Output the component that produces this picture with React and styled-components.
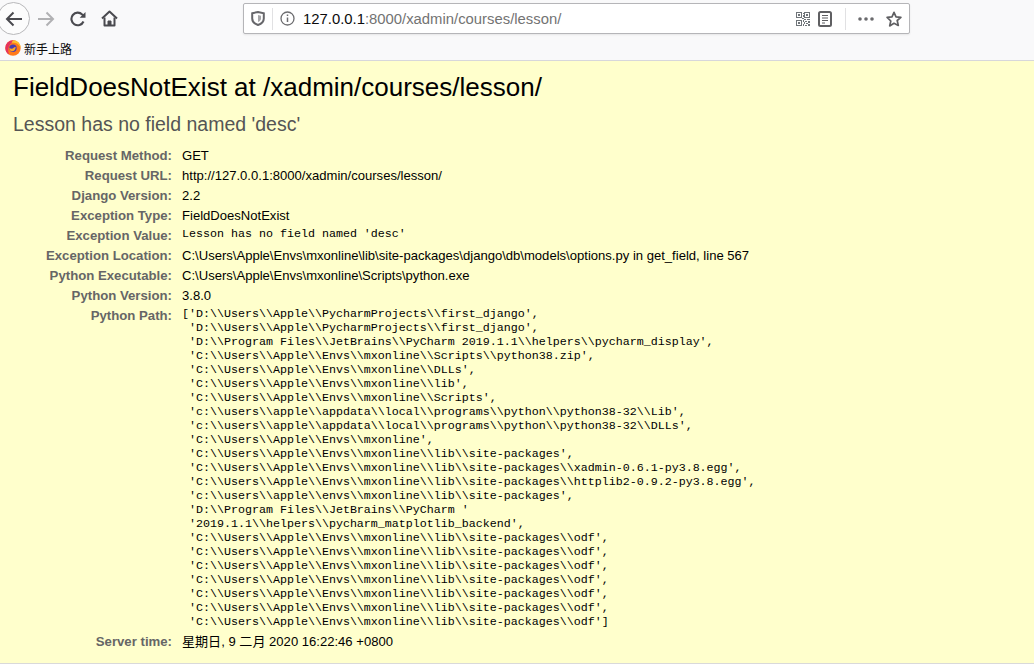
import React from "react";
import styled, { createGlobalStyle } from "styled-components";

const Global = createGlobalStyle`
  html, body { margin: 0; padding: 0; background: #ffc; }
  body { width: 1034px; height: 664px; overflow: hidden; font-family: "Liberation Sans", Arial, sans-serif; }
`;
const Page = styled.div`display: flex; flex-direction: column; height: 664px; overflow: hidden;`;
const Chrome = styled.header`
  background: #f9f9fa; height: 60px; border-bottom: 1px solid #d7d7db; flex: none;
  display: flex; flex-direction: column;
`;
const NavBar = styled.div`display: flex; align-items: center; height: 36px; padding-top: 1px;`;
const NavButtons = styled.div`display: flex; align-items: center; width: 243px; flex: none;`;
const BackButton = styled.div`
  margin-left: -3px; border: 1px solid #b8b8ba; border-radius: 50%;
  width: 31px; height: 31px; background: #fcfcfc; display: flex; align-items: center; justify-content: center; flex: none;
`;
const IconSlot = styled.div`
  display: flex; align-items: center; justify-content: center; flex: none;
  width: ${p => p.$w || 16}px; margin-left: ${p => p.$ml || 0}px;
`;
const UrlBar = styled.div`
  width: 665px; height: 29px; background: #fff; border: 1px solid #b5b5b8; border-radius: 2px;
  display: flex; align-items: center; box-shadow: 0 1px 2px rgba(0,0,0,.08); flex: none;
`;
const Divider = styled.span`width: 1px; height: 22px; background: #e1e1e3; flex: none;`;
const UrlText = styled.div`
  font-size: 14.85px; color: #737373; flex: 1; margin-left: 8px; white-space: nowrap;
  b { font-weight: normal; color: #0c0c0d; }
`;
const Bookmarks = styled.div`
  display: flex; align-items: center; height: 24px; padding-left: 5px; gap: 3px;
  font-size: 12px; color: #0c0c0d; font-family: "Noto Sans CJK SC", sans-serif;
`;
const Content = styled.main`flex: 1; background: #ffc; padding: 10px 13px 0; color: #000; border-bottom: 1px solid #d9d9d9;`;
const Title = styled.h1`margin: 0; font-weight: normal; font-size: 26px; line-height: 32px;`;
const Subtitle = styled.h2`margin: 9px 0 0; font-weight: normal; font-size: 19.5px; line-height: 24px; color: #555;`;
const Meta = styled.div`margin-top: 10px; display: grid; grid-template-columns: 159px 1fr; column-gap: 10px; font-size: 13.07px;`;
const Label = styled.div`
  text-align: right; font-weight: bold; color: #666; line-height: 14px; padding: 3px 0; font-size: 13.2px;
`;
const Value = styled.div`line-height: 14px; padding: 3px 0; white-space: nowrap;
  font-family: ${p => p.$cjk ? '"Liberation Sans", "Noto Sans CJK SC", sans-serif' : 'inherit'};
`;
const Mono = styled.pre`
  margin: 0; padding: 1px 0 3px; font-family: "Liberation Mono", "Courier New", monospace;
  font-size: 11.67px; line-height: 14px; white-space: pre;
`;

const rows = [
  ["Request Method:", "GET"],
  ["Request URL:", "http://127.0.0.1:8000/xadmin/courses/lesson/"],
  ["Django Version:", "2.2"],
  ["Exception Type:", "FieldDoesNotExist"],
  ["Exception Value:", "Lesson has no field named 'desc'", true],
  ["Exception Location:", "C:\\Users\\Apple\\Envs\\mxonline\\lib\\site-packages\\django\\db\\models\\options.py in get_field, line 567"],
  ["Python Executable:", "C:\\Users\\Apple\\Envs\\mxonline\\Scripts\\python.exe"],
  ["Python Version:", "3.8.0"],
];
const sp = "'C:\\\\Users\\\\Apple\\\\Envs\\\\mxonline\\\\lib\\\\site-packages\\\\odf'";
const path = `['D:\\\\Users\\\\Apple\\\\PycharmProjects\\\\first_django',
 'D:\\\\Users\\\\Apple\\\\PycharmProjects\\\\first_django',
 'D:\\\\Program Files\\\\JetBrains\\\\PyCharm 2019.1.1\\\\helpers\\\\pycharm_display',
 'C:\\\\Users\\\\Apple\\\\Envs\\\\mxonline\\\\Scripts\\\\python38.zip',
 'C:\\\\Users\\\\Apple\\\\Envs\\\\mxonline\\\\DLLs',
 'C:\\\\Users\\\\Apple\\\\Envs\\\\mxonline\\\\lib',
 'C:\\\\Users\\\\Apple\\\\Envs\\\\mxonline\\\\Scripts',
 'c:\\\\users\\\\apple\\\\appdata\\\\local\\\\programs\\\\python\\\\python38-32\\\\Lib',
 'c:\\\\users\\\\apple\\\\appdata\\\\local\\\\programs\\\\python\\\\python38-32\\\\DLLs',
 'C:\\\\Users\\\\Apple\\\\Envs\\\\mxonline',
 'C:\\\\Users\\\\Apple\\\\Envs\\\\mxonline\\\\lib\\\\site-packages',
 'C:\\\\Users\\\\Apple\\\\Envs\\\\mxonline\\\\lib\\\\site-packages\\\\xadmin-0.6.1-py3.8.egg',
 'C:\\\\Users\\\\Apple\\\\Envs\\\\mxonline\\\\lib\\\\site-packages\\\\httplib2-0.9.2-py3.8.egg',
 'c:\\\\users\\\\apple\\\\envs\\\\mxonline\\\\lib\\\\site-packages',
 'D:\\\\Program Files\\\\JetBrains\\\\PyCharm '
 '2019.1.1\\\\helpers\\\\pycharm_matplotlib_backend',
 ${sp},
 ${sp},
 ${sp},
 ${sp},
 ${sp},
 ${sp},
 ${sp}]`;

const BackIcon = () => (
  <svg width="17" height="16" viewBox="0 0 17 16" fill="none" stroke="#4a4a4f" strokeWidth="2"><path d="M17 8H2M8.500 1.500L2 8l6.500 6.500" /></svg>
);
const ForwardIcon = () => (
  <svg width="17" height="16" viewBox="0 0 17 16" fill="none" stroke="#b1b1b3" strokeWidth="2"><path d="M0 8h15M8.500 1.500L15 8l-6.500 6.500" /></svg>
);
const ReloadIcon = () => (
  <svg width="16" height="16" viewBox="0 0 16 16" fill="none" stroke="#4a4a4f" strokeWidth="2.100"><path d="M13.500 10.500A6.300 6.300 0 1 1 12.300 3.600L13.800 5" /><path d="M15.500 1v5.800H9.700" fill="#4a4a4f" stroke="none" /></svg>
);
const HomeIcon = () => (
  <svg width="17" height="17" viewBox="0 0 17 17" fill="none" stroke="#4a4a4f" strokeWidth="2" strokeLinejoin="round"><path d="M1 8.500L8.500 1.500 16 8.500" /><path d="M3.500 7.500V15.500h10V7.500" /><path d="M7 15.500v-4.500h3v4.500" fill="#4a4a4f" strokeWidth="1" /></svg>
);
const ShieldIcon = () => (
  <svg width="14" height="15" viewBox="0 0 14 15" fill="none"><path d="M1.200 2.200L7 1l5.800 1.200V7.500C12.800 11 10 13 7 14 4 13 1.200 11 1.200 7.500z" stroke="#66666a" strokeWidth="2" /><path d="M7 4l3 .7v2.800c0 1.700-1.300 2.800-3 3.500z" fill="#a5a5a8" /></svg>
);
const InfoIcon = () => (
  <svg width="15" height="15" viewBox="0 0 15 15" fill="none" stroke="#6d6d70"><circle cx="7.500" cy="7.500" r="6.500" strokeWidth="1.300" /><path d="M7.500 6.500v4.500" strokeWidth="1.500" /><path d="M7.500 3.500v1.500" strokeWidth="1.500" /></svg>
);
const QrIcon = () => (
  <svg width="14" height="14" viewBox="0 0 14 14" fill="#6f7479" shapeRendering="crispEdges">
    <path fillRule="evenodd" d="M0 0h6v6H0zM1 1v4h4V1zM8 0h6v6H8zM9 1v4h4V1zM0 8h6v6H0zM1 9v4h4V9z" />
    <path d="M2 2h2v2H2zM10 2h2v2h-2zM2 10h2v2H2zM7 1h1v1H7zM7 3h1v2H7zM6 6h2v1H6zM8 7h2v1H8zM11 7h3v1h-3zM7 8h1v2H7zM9 9h2v1H9zM12 9h2v2h-2zM8 10h1v2H8zM10 11h2v1h-2zM7 12h1v2H7zM9 13h2v1H9zM12 12h2v2h-2z" />
  </svg>
);
const ReaderIcon = () => (
  <svg width="14" height="16" viewBox="0 0 14 16" fill="none" stroke="#5f5f62"><rect x="1" y="1" width="12" height="14" rx="1.500" strokeWidth="2" /><path d="M4 4.500h6M4 7h6M4 9.500h6M4 12h3" strokeWidth="1" /></svg>
);
const DotsIcon = () => (
  <svg width="16" height="4" viewBox="0 0 16 4" fill="#6a6a6d"><circle cx="2" cy="2" r="1.800" /><circle cx="8" cy="2" r="1.800" /><circle cx="14" cy="2" r="1.800" /></svg>
);
const StarIcon = () => (
  <svg width="16" height="16" viewBox="0 0 16 16" fill="none" stroke="#5f5f62" strokeWidth="1.700" strokeLinejoin="round"><path d="M8 1.300l2 4.500 4.900.5-3.700 3.200 1.100 4.900L8 12.300l-4.300 2.600 1.100-4.900L1.100 6.300l4.900-.5z" /></svg>
);
const FirefoxIcon = () => (
  <svg width="16" height="16" viewBox="0 0 16 16">
    <circle cx="8" cy="8" r="7.700" fill="#ff7a1a" />
    <path d="M8 .3A7.700 7.700 0 0 0 .3 8a7.700 7.700 0 0 0 4 6.700C2.500 11 3 6 6 3.500 7.500 2.300 9 2 10.500 1z" fill="#e6335f" />
    <path d="M8 .3c2.500 0 5 1 6.500 3.500.8 1.300 1.200 3 1.200 4.200-1-2.700-3-4.500-5.500-5C8.500 2.600 7.500 2.500 6.500 3 7 1.800 7.500 1 8 .3z" fill="#ffc02e" />
    <circle cx="8" cy="8.200" r="3.700" fill="#4b3bb0" />
    <path d="M4.300 8c1.500 1 3.500 1 4.700-.5.600-.7 1.200-.7 1.700-.2-.2 2.700-2.200 4.500-4.300 3.900C5 10.800 4.400 9.500 4.300 8z" fill="#ffa726" />
  </svg>
);

export default function App() {
  return (
    <Page>
      <Global />
      <Chrome>
        <NavBar>
          <NavButtons>
            <BackButton><BackIcon /></BackButton>
            <IconSlot $ml={8} $w={17}><ForwardIcon /></IconSlot>
            <IconSlot $ml={15} $w={16}><ReloadIcon /></IconSlot>
            <IconSlot $ml={15} $w={17}><HomeIcon /></IconSlot>
          </NavButtons>
          <UrlBar>
            <IconSlot $ml={7} $w={14}><ShieldIcon /></IconSlot>
            <IconSlot $ml={7} $w={1}><Divider /></IconSlot>
            <IconSlot $ml={7} $w={15}><InfoIcon /></IconSlot>
            <UrlText><b>127.0.0.1</b>:8000/xadmin/courses/lesson/</UrlText>
            <IconSlot $w={14}><QrIcon /></IconSlot>
            <IconSlot $ml={8} $w={14}><ReaderIcon /></IconSlot>
            <IconSlot $ml={13} $w={1}><Divider /></IconSlot>
            <IconSlot $ml={12} $w={16}><DotsIcon /></IconSlot>
            <IconSlot $ml={12} $w={16}><StarIcon /></IconSlot>
            <IconSlot $w={7} />
          </UrlBar>
        </NavBar>
        <Bookmarks><FirefoxIcon />新手上路</Bookmarks>
      </Chrome>
      <Content>
        <Title>FieldDoesNotExist at /xadmin/courses/lesson/</Title>
        <Subtitle>Lesson has no field named 'desc'</Subtitle>
        <Meta>
          {rows.map(([label, value, mono]) => (
            <React.Fragment key={label}>
              <Label>{label}</Label>
              {mono ? <Mono>{value}</Mono> : <Value>{value}</Value>}
            </React.Fragment>
          ))}
          <Label>Python Path:</Label>
          <Mono>{path}</Mono>
          <Label>Server time:</Label>
          <Value $cjk>星期日, 9 二月 2020 16:22:46 +0800</Value>
        </Meta>
      </Content>
    </Page>
  );
}
